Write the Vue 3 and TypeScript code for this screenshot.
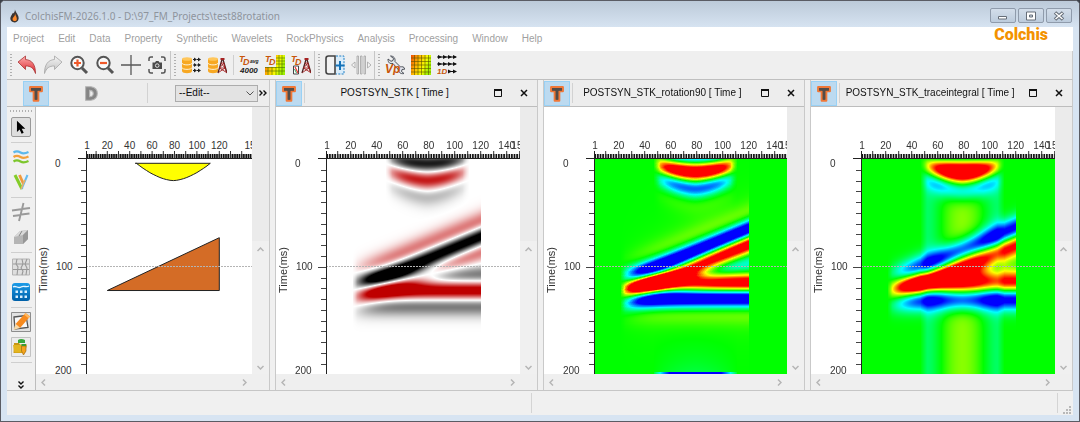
<script setup lang="ts">
import { computed, onMounted, ref } from 'vue'

type Mode = 'model' | 'stack' | 'rotated' | 'integral'
interface Section {
  id: string
  title: string
  mode: Mode
  scale: number
  labels: number[]
}

const MS = 1.078
const LEFT = 50
const TOP = 51
const HEIGHT = 266

const sections: Section[] = [
  { id: 'model', title: '', mode: 'model', scale: 1.12, labels: [20, 40, 60, 80, 100, 120] },
  { id: 'stk', title: 'POSTSYN_STK [ Time ]', mode: 'stack', scale: 1.3, labels: [20, 40, 60, 80, 100, 120, 140] },
  { id: 'rot', title: 'POSTSYN_STK_rotation90 [ Time ]', mode: 'rotated', scale: 1.3, labels: [20, 40, 60, 80, 100, 120, 140] },
  { id: 'int', title: 'POSTSYN_STK_traceintegral [ Time ]', mode: 'integral', scale: 1.3, labels: [20, 40, 60, 80, 100, 120, 140] },
]

const menus = ['Project', 'Edit', 'Data', 'Property', 'Synthetic', 'Wavelets', 'RockPhysics', 'Analysis', 'Processing', 'Window', 'Help']

const toolGroups: [string, string][][] = [
  [['undo', 'Undo'], ['redo', 'Redo'], ['zoomin', 'Zoom in'], ['zoomout', 'Zoom out'], ['cross', 'Crosshair'], ['camera', 'Snapshot']],
  [['dblog', 'Log database'], ['dbwell', 'Well database'], ['sep', ''], ['tdavg', 'Average time-depth'], ['tdgrid', 'Time-depth grid'], ['tdwell', 'Time-depth well']],
  [['addpanel', 'Add panel'], ['stripes', 'Spread panels']],
  [['vp', 'Velocity tools'], ['heat', 'Property grid'], ['oned', '1D run']],
]

const sideTools: [string, string][] = [
  ['pointer', 'Select'], ['sep', ''], ['waves', 'Horizons'], ['faults', 'Faults'], ['sep', ''],
  ['cut', 'Intersect'], ['cube', 'Body'], ['sep', ''], ['mesh', 'Mesh'], ['layers', 'Layers'], ['sep', ''],
  ['pencil', 'Edit'], ['folder', 'Edit folder'], ['sep', ''],
]

const px = (s: Section, trace: number) => LEFT + (trace - 1) * s.scale
const py = (time: number) => TOP + time * MS

function tracePath(s: Section, step: number, from: number): string {
  let d = ''
  for (let t = step === 10 ? 10 : 2; t <= 150; t += step) d += `M${px(s, t).toFixed(1)} ${from}V${TOP}`
  return d
}
const timePath = computed(() => {
  let d = ''
  for (let t = 10; t < 200; t += 10) {
    const y = Math.round(py(t)) + 0.5
    d += `M${t === 100 ? LEFT - 8 : LEFT - 5} ${y}H${LEFT}`
  }
  return d
})

/* Reflector geometry in milliseconds */
const domeBase = (x: number) => {
  const u = Math.abs(x - 79) / 33
  return u >= 1 ? 4 : 4 + 16 * (1 - Math.pow(u, 1.7))
}
const wedgeTop = (x: number) => 122 - (x - 20) * 0.5

const domePath = (s: Section) => {
  let d = `M${px(s, 45).toFixed(1)} ${py(4)}`
  for (let t = 46; t <= 112; t += 3) d += `L${px(s, t).toFixed(1)} ${py(domeBase(t)).toFixed(1)}`
  return d + `L${px(s, 112).toFixed(1)} ${py(4)}Z`
}
const wedgePath = (s: Section) =>
  `M${px(s, 20).toFixed(1)} ${py(122)}L${px(s, 120).toFixed(1)} ${py(73)}V${py(122)}Z`

/* Wavelets, peak frequency in cycles per millisecond */
const F0 = 0.025
const ricker = (t: number) => {
  const a = Math.pow(Math.PI * F0 * t, 2)
  return (1 - 2 * a) * Math.exp(-a)
}
const integrated = (t: number) => (t / 5.46) * Math.exp(-Math.pow(Math.PI * F0 * t, 2))
const quadTable: number[] = (() => {
  const out: number[] = []
  for (let i = 0; i <= 900; i++) {
    let v = 0
    let n = 0
    for (let f = 0.001; f < 0.1; f += 0.001) {
      const w = f * f * Math.exp(-(f * f) / (F0 * F0))
      v += w * Math.sin(2 * Math.PI * f * i * 0.25)
      n += w
    }
    out.push(v / n)
  }
  return out
})()
const quadrature = (t: number) => Math.sign(t) * (quadTable[Math.round(Math.abs(t) * 4)] ?? 0)

function amplitude(mode: Mode, x: number, t: number): number {
  const w = mode === 'stack' ? ricker : mode === 'rotated' ? quadrature : integrated
  const gain = mode === 'stack' ? 1.15 : mode === 'rotated' ? 1.6 : 1.05
  const dome = mode === 'integral' ? 0.72 : 0.54
  let v = 0
  if (x >= 47 && x <= 111) {
    const taper = Math.min(1, (35 - Math.abs(x - 79)) / 8)
    const b = Math.max(domeBase(x), 5)
    v += dome * taper * (w(t - 4) - w(t - b))
    if (mode === 'integral') {
      const start = w(-b) - w(-4)
      v += dome * taper * (start < 0 ? start * 0.75 : start)
    }
    if (mode === 'rotated') {
      const k = (b - 4) / 16
      v -= k * 0.09 * Math.exp((t - 200) / 18)
      if (t > 198) v -= k
    }
  }
  if (x >= 22 && x <= 120.6) {
    const top = Math.min(wedgeTop(x), 121)
    const taper = Math.min(1, (x - 19) / 6)
    v += taper * (w(t - top) - w(t - 122))
  }
  return Math.max(-1, Math.min(1, v * gain))
}

function colour(mode: Mode, v: number): [number, number, number] {
  if (mode === 'stack') {
    if (v >= 0) return [255 * (1 - v), 255 * (1 - v), 255 * (1 - v)]
    return [255 + 65 * v, 255 * (1 + v), 255 * (1 + v)]
  }
  if (v > 0.5) return [255, 255 * (2 - 2 * v), 0]
  if (v > 0) return [510 * v, 255, 0]
  if (v > -0.5) return [0, 255, -510 * v]
  return [0, 255 * (2 + 2 * v), 255]
}

const canvases = ref<HTMLCanvasElement[]>([])

onMounted(() => {
  for (const canvas of canvases.value) {
    const s = sections.find((e) => e.id === canvas.dataset.section)
    const ctx = canvas.getContext('2d')
    if (!s || !ctx) continue
    const img = ctx.createImageData(canvas.width, canvas.height)
    for (let j = 0; j < canvas.height; j++) {
      for (let i = 0; i < canvas.width; i++) {
        const c = colour(s.mode, amplitude(s.mode, 1 + (i + 0.5) / s.scale, (j + 0.5) / MS))
        img.data.set([c[0], c[1], c[2], 255], (j * canvas.width + i) * 4)
      }
    }
    ctx.putImageData(img, 0, 0)
  }
})
</script>

<template>
  <svg class="defs" aria-hidden="true">
    <defs>
      <linearGradient id="g-red" x1="0" y1="0" x2="0" y2="1"><stop offset="0" stop-color="#ffb0b0" /><stop offset="1" stop-color="#d81e26" /></linearGradient>
      <linearGradient id="g-grey" x1="0" y1="0" x2="0" y2="1"><stop offset="0" stop-color="#f4f4f4" /><stop offset="1" stop-color="#bdbdbd" /></linearGradient>
      <linearGradient id="g-heat" x1="0" y1="0" x2="1" y2="0.4"><stop offset="0" stop-color="#f04a00" /><stop offset="0.45" stop-color="#ffc000" /><stop offset="0.75" stop-color="#f4ff00" /><stop offset="1" stop-color="#a0f000" /></linearGradient>
      <linearGradient id="g-blue" x1="0" y1="0" x2="0" y2="1"><stop offset="0" stop-color="#1b9be8" /><stop offset="1" stop-color="#0060a8" /></linearGradient>
      <g id="p-db">
        <path d="M1 4v12c0 3 10 3 10 0V4z" fill="#f7a823" />
        <ellipse cx="6" cy="4" rx="5" ry="1.8" fill="#ffc65a" />
        <path d="M1 8c0 2.500 10 2.500 10 0M1 12.500c0 2.500 10 2.500 10 0" stroke="#fff3d8" stroke-width="1" fill="none" />
      </g>
      <g id="p-tower" fill="none" stroke="#a52222">
        <path d="M15 4.500L11 18M16 4.500L20 18" stroke-width="1.300" stroke="#4d2020" />
        <path d="M14.500 8h2.500L12.500 13h5.500L11.500 17.500M17 8l1 5 1.500 4.500M14 8l4 5M12.500 13l7 4.500" stroke-width=".9" />
        <path d="M13.500 4h4" stroke-width="2" />
      </g>
      <g id="p-t">
        <path d="M3.500 3h13v4.500h-4V18H7.500V7.500h-4z" fill="#524c48" stroke="#f07838" stroke-width="2.400" stroke-linejoin="round" />
        <path d="M4.500 4h11v3h-4v10H8.500V7h-4z" fill="#524c48" />
      </g>
    </defs>
    <symbol id="i-undo" viewBox="0 0 20 20"><path d="M1 7L8.500 1v3.500C15 5 18.500 9.500 18.500 18.500 16.500 13 14 11 8.500 11v3.500z" fill="url(#g-red)" stroke="#a33" stroke-width=".8" /></symbol>
    <symbol id="i-redo" viewBox="0 0 20 20"><path d="M19 7L11.500 1v3.500C5 5 1.500 9.500 1.500 18.500 3.500 13 6 11 11.500 11v3.500z" fill="url(#g-grey)" stroke="#a6a6a6" stroke-width=".8" /></symbol>
    <symbol id="i-zoomin" viewBox="0 0 20 20"><circle cx="8.500" cy="8" r="6.200" fill="#fafafa" stroke="#555" stroke-width="2" /><path d="M13 13l5 5" stroke="#555" stroke-width="3" /><path d="M5 8h7M8.500 4.500v7" stroke="#f0592a" stroke-width="2.200" /></symbol>
    <symbol id="i-zoomout" viewBox="0 0 20 20"><circle cx="8.500" cy="8" r="6.200" fill="#fafafa" stroke="#555" stroke-width="2" /><path d="M13 13l5 5" stroke="#555" stroke-width="3" /><path d="M5 8h7" stroke="#f0592a" stroke-width="2.200" /></symbol>
    <symbol id="i-cross" viewBox="0 0 20 20"><path d="M0 10h20M10 0v20" stroke="#585858" stroke-width="1.300" /></symbol>
    <symbol id="i-camera" viewBox="0 0 20 20"><path d="M2 6V4q0-2 2-2h2M14 2h2q2 0 2 2v2M18 14v2q0 2-2 2h-2M6 18H4q-2 0-2-2v-2" fill="none" stroke="#555" stroke-width="1.500" /><path d="M5.500 7.500h2.500l1-1.500h2.500l1 1.500H15V14H5.500z" fill="#4c4c4c" /><circle cx="10.200" cy="10.600" r="1.800" fill="none" stroke="#eee" stroke-width=".9" /></symbol>
    <symbol id="i-dblog" viewBox="0 0 20 20"><use href="#p-db" /><path d="M12 4.500h3M12 10h3M12 15.500h3M16 4.500h3M16 10h3M16 15.500h3" stroke="#222" stroke-width="1.200" /><path d="M13 2.500l3 2-3 2zM13 8l3 2-3 2zM13 13.500l3 2-3 2zM17 2.500l3 2-3 2zM17 8l3 2-3 2zM17 13.500l3 2-3 2z" fill="#222" /></symbol>
    <symbol id="i-dbwell" viewBox="0 0 20 20"><use href="#p-db" /><use href="#p-tower" /></symbol>
    <symbol id="i-tdavg" viewBox="0 0 20 20"><text x="0" y="7" class="ic orange s9">T</text><text x="4" y="10" class="ic orange s9">D</text><text x="11" y="8" class="ic s5">avg</text><text x="1" y="18" class="ic s8">4000</text></symbol>
    <symbol id="i-tdgrid" viewBox="0 0 20 20"><path d="M11 0h9v20H0v-8h11z" fill="url(#g-heat)" /><path d="M14 0v20M17 0v20M11 3h9M11 6h9M11 9h9M0 12.500h20M0 16h20M3 12v8M7 12v8M11 12v8" stroke="#4c6b00" stroke-width=".6" fill="none" /><text x="0" y="7" class="ic orange s9">T</text><text x="4" y="10" class="ic orange s9">D</text></symbol>
    <symbol id="i-tdwell" viewBox="0 0 20 20"><use href="#p-tower" /><text x="0" y="7" class="ic orange s9">T</text><text x="4" y="10" class="ic orange s9">D</text><path d="M2.500 11h5v8h-5z" fill="#fff" stroke="#444" /><path d="M4 12l3 6" stroke="#e33" stroke-width="1.300" /><path d="M3.500 14l2 4" stroke="#3a6" /></symbol>
    <symbol id="i-addpanel" viewBox="0 0 20 20"><path d="M10 1v18H3.500Q1 19 1 16.500v-13Q1 1 3.500 1z" fill="#f2f2f2" stroke="#444" stroke-width="1.600" /><path d="M11 1h8v18h-8" fill="#d9ecfa" stroke="#1f7fc4" stroke-dasharray="2 1.300" /><path d="M10.500 10.500h9M15 6v9" stroke="#1472b8" stroke-width="2" /></symbol>
    <symbol id="i-stripes" viewBox="0 0 20 20"><path d="M6 1h1.500v18H6zM9.500 1H11v18H9.500zM13 1h1.500v18H13z" fill="#e8e8e8" stroke="#a3a3a3" stroke-width=".8" /><path d="M4 7v6l-3.500-3zM16.500 7v6L20 10z" fill="#f4f4f4" stroke="#a3a3a3" stroke-width=".8" /></symbol>
    <symbol id="i-vp" viewBox="0 0 20 20"><path d="M5.500 1l3 2.500-.5 2-2 .8L3 4c0 4 2 5 5 4.500l6 7c0 3 3 3.500 5 3l-2.500-2 .5-2 3-.5c-1-2.500-3-2.500-4.500-2L10 6.500C10.500 3 8.500 1 5.500 1z" fill="#e5e8ec" stroke="#4a4f58" stroke-width="1" /><text x="0" y="18" class="ic orange s10">Vp</text></symbol>
    <symbol id="i-heat" viewBox="0 0 20 20"><path d="M0 0h20v20H0z" fill="url(#g-heat)" /><path d="M3.500 0v20M7 0v20M10.500 0v20M14 0v20M17.500 0v20M0 3h20M0 6.500h20M0 10h20M0 13.500h20M0 17h20" stroke="#5b5200" stroke-width=".6" /></symbol>
    <symbol id="i-oned" viewBox="0 0 20 20"><path d="M0 2h19M0 9h19M11 16.500h8" stroke="#111" stroke-width="1" /><path d="M1 0l4 2-4 2zM6 0l4 2-4 2zM11 0l4 2-4 2zM16 0l4 2-4 2zM1 7l4 2-4 2zM6 7l4 2-4 2zM11 7l4 2-4 2zM16 7l4 2-4 2zM11 14.500l4 2-4 2zM16 14.500l4 2-4 2z" fill="#111" /><text x="0" y="19" class="ic orange s8">1D</text></symbol>
    <symbol id="i-pointer" viewBox="0 0 20 20"><path d="M5.500 3v12.500l3-2.700 2.200 4.700 2.300-1-2.200-4.600h4z" fill="#000" /></symbol>
    <symbol id="i-waves" viewBox="0 0 20 20"><g fill="none" stroke-width="2.200"><path d="M2.500 5.500c3-2 4.500-1.500 7 0s5 1 8-.5" stroke="#5cb8ec" /><path d="M2.500 10c3-2 4.500-1.500 7 0s5 1 8-.5" stroke="#f2a03c" /><path d="M2.500 14.500c3-2 4.500-1.500 7 0s5 1 8-.5" stroke="#7cc62c" /></g></symbol>
    <symbol id="i-faults" viewBox="0 0 20 20"><g fill="none"><path d="M4 3l7 14" stroke="#84cc28" stroke-width="3" /><path d="M8.500 3l4 9" stroke="#f09a3c" stroke-width="2.800" /><path d="M16.500 3l-6 14" stroke="#64bcf0" stroke-width="2" /><path d="M14 8l-4 9" stroke="#f0b060" stroke-width="1.500" /></g></symbol>
    <symbol id="i-cut" viewBox="0 0 20 20"><path d="M12.500 1L8 19M1 8.500l9-1.200M11 7l8-1M2 14l8-1M10.500 12.500l8-1" stroke="#9a9a9a" stroke-width="1.900" /></symbol>
    <symbol id="i-cube" viewBox="0 0 20 20"><path d="M3 10l6-6 8-1v9l-5 5H3z" fill="#b5b5b5" /><path d="M3 10l6-6 8-1-5 5z" fill="#d8d8d8" /><path d="M12 8l5-5v9l-5 5z" fill="#979797" /><path d="M8 9l3-5" stroke="#888" /></symbol>
    <symbol id="i-mesh" viewBox="0 0 20 20"><path d="M1.500 2h17v16h-17z" fill="#dedede" stroke="#b4b4b4" /><path d="M2 7h16M2 12.500h16M6 2l-1 5 2 3-1 8M11 2l1 5-2 4 2 3-1 4M16 2l-2 5 2 4-1 7" fill="none" stroke="#999" stroke-width="1.100" /></symbol>
    <symbol id="i-layers" viewBox="0 0 20 20"><rect x="1" y="1" width="18" height="18" rx="3" fill="url(#g-blue)" /><path d="M2 5c3-2 5 2 8 0s5 1 8-1" stroke="#e6f5ff" stroke-width="1.300" fill="none" /><path d="M4.500 8.500h2.500V11H4.500zM9 8.500h2.500V11H9zM13.500 8.500H16V11h-2.500zM4.500 13.500h2.500V16H4.500zM9 13.500h2.500V16H9zM13.500 13.500H16V16h-2.500z" fill="#d9f0ff" /></symbol>
    <symbol id="i-pencil" viewBox="0 0 20 20"><path d="M.500.500h19v19H.500z" fill="#e2e2e2" stroke="#8d8d8d" /><path d="M3 5l12-1.500 2 12L4 17z" fill="#f8f8f8" stroke="#555" stroke-width="1.300" /><path d="M14.500 1l4.500 3.500L9 16 4.500 12z" fill="#f78a1e" /><path d="M4.500 12L9 16l-6.500 2z" fill="#f6d9a8" /><path d="M13 2.500L14.500 1 19 4.500l-1.500 1.700z" fill="#ffb860" /></symbol>
    <symbol id="i-folder" viewBox="0 0 20 20"><path d="M.500.500h19v19H.500z" fill="#ececec" stroke="#c2c2c2" /><path d="M7 3q3-2 7 0v3H7z" fill="#35a83c" /><path d="M3 6h5l1 1.500h7L14 16H2.500z" fill="#c99612" /><path d="M2 8h13l-2 7.500H3.500z" fill="#e3b51f" /><path d="M10.500 9h4.500v5l-2.500 4-2-4z" fill="#f4a31c" stroke="#93610c" stroke-width=".6" /><path d="M10.500 9V7h4.500v2z" fill="#3c9a34" /></symbol>
    <symbol id="i-t" viewBox="0 0 20 20"><use href="#p-t" /></symbol>
  </svg>

  <div class="window">
    <header class="titlebar">
      <svg class="flame" viewBox="0 0 12 14"><path d="M6.500 0C7 3 11 6 10.500 10 10 13 8 14 6 14S1 12.500 1.500 9C2 6.500 3.500 6 3.500 4 5 5 6.500 3 6.500 0z" fill="#3c3431" /><path d="M6.500 4C7 7 9 8 8.500 11c-.5 2-4 2-4.500 0-.5-3 3-3 2.500-7z" fill="#ff8a2a" /></svg>
      <h1>ColchisFM-2026.1.0 - D:\97_FM_Projects\test88rotation</h1>
      <div class="winbtns">
        <button type="button" aria-label="Minimize"><svg viewBox="0 0 12 10"><path d="M1.500 5.500h8v2.500h-8z" fill="#fff" stroke="#666e78" /></svg></button>
        <button type="button" aria-label="Restore"><svg viewBox="0 0 12 10"><path d="M1.500 1h9v8h-9z" fill="#fff" stroke="#666e78" /><path d="M4.500 4h3v2h-3z" fill="#ccd8e4" stroke="#666e78" /></svg></button>
        <button type="button" aria-label="Close window"><svg viewBox="0 0 12 10"><path d="M2 1.500l8 7M10 1.500l-8 7" stroke="#666e78" stroke-width="3.600" /><path d="M2.500 2l7 6M9.500 2l-7 6" stroke="#fff" stroke-width="1.500" /></svg></button>
      </div>
    </header>

    <div class="client">
      <nav class="menubar">
        <button v-for="m in menus" :key="m" type="button">{{ m }}</button>
        <strong class="brand">Colchis</strong>
      </nav>

      <div class="toolbar">
        <div v-for="(group, gi) in toolGroups" :key="gi" class="group">
          <i class="grip"></i>
          <template v-for="[name, label] in group" :key="name">
            <i v-if="name === 'sep'" class="vsep"></i>
            <button v-else type="button" :aria-label="label"><svg><use :href="'#i-' + name" /></svg></button>
          </template>
        </div>
      </div>

      <main class="docks">
        <section v-for="s in sections" :key="s.id" class="dock" :class="{ first: s.mode === 'model' }">
          <div v-if="s.mode === 'model'" class="head lead">
            <button type="button" class="tbtn on" aria-label="Time domain"><svg><use href="#i-t" /></svg></button>
            <button type="button" class="tbtn dbtn" aria-label="Depth domain"><svg viewBox="0 0 20 20"><path d="M4 2.500h6q7 1 7 7.500t-7 7.500H4zM8.500 6.500v7q4 0 4-3.500t-4-3.500z" fill="#858585" fill-rule="evenodd" stroke="#b4b4b4" stroke-width="1.200" /></svg></button>
            <i class="line"></i>
            <div class="combo">
              <select aria-label="Edit target"><option>--Edit--</option></select>
              <svg viewBox="0 0 8 5"><path d="M.500.500L4 4 7.500.500" fill="none" stroke="#555" /></svg>
            </div>
            <button type="button" class="more" aria-label="More"><svg viewBox="0 0 8 6"><path d="M.500.500L3 3 .500 5.500M4.500.500L7 3 4.500 5.500" fill="none" stroke="#111" stroke-width="1.400" /></svg></button>
          </div>
          <div v-else class="head">
            <button type="button" class="tbtn on" aria-label="Time domain"><svg><use href="#i-t" /></svg></button>
            <i class="line"></i>
            <h2>{{ s.title }}</h2>
            <button type="button" class="hbtn" aria-label="Maximize"><svg viewBox="0 0 8 8"><path d="M.500 1h7v6.500h-7z" fill="none" stroke="#111" /><path d="M0 1h8" stroke="#111" stroke-width="2" /></svg></button>
            <button type="button" class="hbtn" aria-label="Close"><svg viewBox="0 0 8 8"><path d="M1 1l6 6M7 1L1 7" stroke="#111" stroke-width="1.500" /></svg></button>
          </div>

          <div class="body">
            <div v-if="s.mode === 'model'" class="side">
              <i class="grip"></i>
              <template v-for="([name, label], ti) in sideTools" :key="ti">
                <i v-if="name === 'sep'" class="hsep"></i>
                <button v-else type="button" :class="{ active: name === 'pointer' }" :aria-label="label"><svg><use :href="'#i-' + name" /></svg></button>
              </template>
              <button type="button" class="expand" aria-label="More tools"><svg viewBox="0 0 6 8"><path d="M.500.500L3 3 5.500.500M.500 4.500L3 7l2.500-2.500" fill="none" stroke="#111" stroke-width="1.400" /></svg></button>
            </div>

            <div class="scroller">
              <div class="view">
                <div class="plot">
                  <canvas v-if="s.mode !== 'model'" ref="canvases" :data-section="s.id" width="196" height="215"></canvas>
                  <svg class="axes" :width="LEFT + 212" :height="HEIGHT">
                    <g v-if="s.mode === 'model'" stroke="#222">
                      <path :d="domePath(s)" fill="#ff0" />
                      <path :d="wedgePath(s)" fill="#d46c26" />
                    </g>
                    <path :d="`M${LEFT} ${TOP + 107.5}H262`" stroke="#b4b4b4" stroke-dasharray="2 1" />
                    <path :d="tracePath(s, 2, TOP - 5)" stroke="#111" stroke-width="1.700" />
                    <path :d="tracePath(s, 10, TOP - 8)" stroke="#333" />
                    <path :d="`M${LEFT - 8} ${TOP - 0.5}H262`" stroke="#222" />
                    <path :d="`M${LEFT + 0.5} ${TOP - 8}V${HEIGHT}`" stroke="#222" />
                    <path :d="timePath" stroke="#444" />
                    <g class="lbl mid">
                      <text :x="LEFT + 1" y="41">1</text>
                      <text v-for="n in s.labels" :key="n" :x="px(s, n)" y="41">{{ n }}</text>
                      <text :x="px(s, 150)" y="41">150</text>
                    </g>
                    <g class="lbl">
                      <text x="19" y="59">0</text>
                      <text x="20" y="162">100</text>
                      <text x="19" y="266">200</text>
                    </g>
                    <text class="lbl unit" transform="translate(11 185) rotate(-90)">Time(ms)</text>
                  </svg>
                </div>
              </div>
              <div class="vbar">
                <svg viewBox="0 0 7 5"><path d="M.500 4L3.500 1l3 3" fill="none" stroke="#b5b5b5" stroke-width="1.500" /></svg>
                <svg viewBox="0 0 7 5"><path d="M.500 1l3 3 3-3" fill="none" stroke="#b5b5b5" stroke-width="1.500" /></svg>
              </div>
              <div class="hbar">
                <svg viewBox="0 0 5 7"><path d="M4 .500L1 3.500l3 3" fill="none" stroke="#b5b5b5" stroke-width="1.500" /></svg>
                <svg viewBox="0 0 5 7"><path d="M1 .500l3 3-3 3" fill="none" stroke="#b5b5b5" stroke-width="1.500" /></svg>
              </div>
            </div>
          </div>
        </section>
      </main>

      <footer class="status">
        <i></i><i></i>
        <svg viewBox="0 0 8 8"><path d="M6 0h2v2H6zM3 3h2v2H3zM6 3h2v2H6zM0 6h2v2H0zM3 6h2v2H3zM6 6h2v2H6z" fill="#b8b8b8" /></svg>
      </footer>
    </div>
  </div>
</template>

<style>
body {
  background: #3c4048;
}
</style>

<style scoped>
* {
  box-sizing: border-box;
}
.defs {
  position: absolute;
  width: 0;
  height: 0;
}
.window {
  display: flex;
  flex-direction: column;
  min-height: 100vh;
  padding: 0 6px 6px;
  border: 1px solid #5a5c64;
  border-radius: 5px 5px 0 0;
  background: #d7e4f2;
  font: 10px/14px "Liberation Sans", Arial, sans-serif;
  color: #111;
}
button {
  display: flex;
  align-items: center;
  justify-content: center;
  padding: 0;
  border: 0;
  background: none;
  font: inherit;
  color: inherit;
}
h1,
h2 {
  margin: 0;
  font: inherit;
}
.titlebar {
  display: flex;
  align-items: center;
  height: 26px;
  margin: 0 -6px;
  padding: 3px 7px 0 8px;
  border-radius: 4px 4px 0 0;
  background: linear-gradient(#bccad9, #d6e3f1);
}
.flame {
  width: 11px;
  height: 14px;
}
.titlebar h1 {
  flex: 1;
  margin-left: 5px;
  font-family: "Noto Sans", sans-serif;
  color: #8e949c;
}
.winbtns {
  display: flex;
  gap: 2px;
}
.winbtns button {
  width: 26px;
  height: 15px;
  border: 1px solid #8f9bab;
  border-radius: 2px;
  background: linear-gradient(#d3deea, #bccbdc);
}
.winbtns svg {
  width: 12px;
  height: 10px;
}
.client {
  flex: 1;
  display: flex;
  flex-direction: column;
  background: #f0f0f0;
}
.menubar {
  display: flex;
  height: 24px;
  padding: 0 25px 0 6px;
  gap: 14px;
  background: #fff;
  color: #9f9f9f;
}
.brand {
  margin-left: auto;
  font-family: Roboto, "Liberation Sans", sans-serif;
  font-size: 16px;
  font-weight: 900;
  line-height: 16px;
  color: #f39200;
}
.toolbar {
  display: flex;
  height: 29px;
  border-right: 1px solid #ccc;
  border-bottom: 1px solid #bfbfbf;
  background: #efefef;
}
.group {
  display: flex;
  align-items: center;
  border-right: 1px solid #c6c6c6;
}
.group:last-child {
  border-right: 0;
}
.group .grip {
  width: 7px;
  height: 22px;
  background: repeating-linear-gradient(#b0b0b0 0 1px, transparent 1px 3px) 3px 0 / 2px 100% no-repeat;
}
.group button {
  width: 26px;
  height: 26px;
}
.group svg {
  width: 20px;
  height: 20px;
}
.vsep {
  width: 1px;
  height: 20px;
  margin: 0 2px 0 3px;
  background: #cfcfcf;
}
.docks {
  flex: 1;
  display: grid;
  grid-template-columns: repeat(4, minmax(0, 1fr));
  gap: 5px;
  border-bottom: 1px solid #c6c6c6;
}
.dock {
  display: flex;
  flex-direction: column;
  border: solid #c9c9c9;
  border-width: 0 1px;
}
.dock.first {
  border-left: 0;
}
.head {
  display: flex;
  align-items: center;
  height: 27px;
  border-bottom: 1px solid #bdbdbd;
  background: #ededed;
}
.head.lead {
  padding: 0 1px 0 16px;
}
.tbtn {
  width: 26px;
  height: 25px;
}
.tbtn.on {
  border: 1px solid #99d1f5;
  background: #bcdaf0;
}
.tbtn svg {
  width: 18px;
  height: 19px;
}
.dbtn {
  margin-left: 29px;
}
.line {
  width: 1px;
  height: 20px;
  margin-left: 2px;
  background: #d2d2d2;
}
.lead .line {
  margin: 0 27px 0 43px;
}
.head h2 {
  flex: 1;
  text-align: center;
  white-space: nowrap;
}
.hbtn {
  width: 26px;
  height: 20px;
}
.hbtn svg {
  width: 8px;
  height: 8px;
}
.combo {
  display: grid;
  flex: 1;
  align-items: center;
}
.combo > * {
  grid-area: 1 / 1;
}
.combo select {
  height: 17px;
  padding: 0 3px;
  border: 1px solid #acacac;
  border-radius: 0;
  background: #e3e3e3;
  font: inherit;
  color: #111;
  appearance: none;
}
.combo svg {
  justify-self: end;
  width: 8px;
  height: 5px;
  margin-right: 4px;
  pointer-events: none;
}
.more {
  width: 10px;
  height: 20px;
}
.more svg {
  width: 8px;
  height: 6px;
}
.body {
  flex: 1;
  display: flex;
}
.side {
  display: flex;
  flex-direction: column;
  align-items: center;
  width: 29px;
  border-right: 1px solid #bdbdbd;
  background: #f0f0f0;
}
.side .grip {
  width: 22px;
  height: 8px;
  background: repeating-linear-gradient(90deg, #b0b0b0 0 1px, transparent 1px 3px) 0 3px / 100% 2px no-repeat;
}
.side button {
  width: 20px;
  height: 20px;
  margin: 2px 0 3px;
}
.side button.active {
  border: 1px solid #999;
  border-radius: 2px;
  background: #dedede;
}
.side svg {
  width: 20px;
  height: 20px;
}
.hsep {
  width: 21px;
  height: 1px;
  margin: 2px 0;
  background: #cfcfcf;
}
.side .expand {
  margin-top: auto;
  margin-bottom: 0;
  height: 10px;
}
.side .expand svg {
  width: 6px;
  height: 8px;
}
.scroller {
  flex: 1;
  min-width: 0;
  display: grid;
  grid-template: 1fr 16px / minmax(0, 1fr) 17px;
}
.view {
  overflow: hidden;
  padding-top: 1px;
  background: #fff;
}
.plot {
  display: grid;
  grid-template: 51px auto / 50px auto;
  width: 262px;
}
.plot canvas {
  grid-area: 2 / 2;
  display: block;
}
.axes {
  grid-area: 1 / 1 / 3 / 3;
  display: block;
}
.lbl {
  font-size: 10px;
  fill: #333;
}
.mid {
  text-anchor: middle;
}
.unit {
  font-size: 11px;
}
.vbar {
  display: flex;
  flex-direction: column;
  align-items: center;
  justify-content: flex-end;
  gap: 113px;
  padding-bottom: 4px;
  background: linear-gradient(#ebebeb, #ebebeb) 0 0 / 100% 134px no-repeat #f0f0f0;
}
.vbar svg {
  width: 7px;
  height: 5px;
}
.hbar {
  grid-column: 1 / 3;
  display: flex;
  align-items: center;
  justify-content: space-between;
  padding: 0 22px 0 5px;
  background: #efefef;
}
.hbar svg {
  width: 5px;
  height: 7px;
}
.status {
  display: grid;
  grid-template-columns: 525px 1fr 15px;
  height: 24px;
}
.status i {
  margin: 2px 0;
  border-right: 1px solid #d4d4d4;
}
.status svg {
  width: 8px;
  height: 8px;
  align-self: end;
  justify-self: end;
  margin: 0 2px 1px 0;
}
.ic {
  font: italic bold 8px "Liberation Sans", Arial, sans-serif;
  fill: #222;
}
.orange {
  fill: #c8560a;
}
.s5 {
  font-size: 5px;
}
.s8 {
  font-size: 8px;
}
.s9 {
  font-size: 9px;
}
.s10 {
  font-size: 12px;
}
</style>
